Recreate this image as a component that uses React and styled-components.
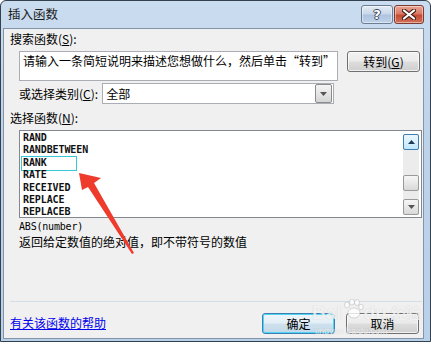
import React from 'react';
import styled, { createGlobalStyle } from 'styled-components';

const GlobalStyle = createGlobalStyle`
  html, body {
    margin: 0;
    padding: 0;
    background: #ffffff;
  }
  body {
    font-family: "Noto Sans CJK SC", "Liberation Sans", sans-serif;
    font-size: 12px;
    color: #000;
  }
`;

const Window = styled.div`
  position: relative;
  width: 431px;
  height: 342px;
  box-sizing: border-box;
  border: 1px solid #34404e;
  border-radius: 6px 6px 0 0;
  background: linear-gradient(180deg, #cadcef 0%, #bdd3ea 40%, #b9d0e9 100%);
  padding: 0 6px 2px 2px;
  display: flex;
  flex-direction: column;
  overflow: hidden;
`;

const TitleBar = styled.div`
  height: 27px;
  display: flex;
  align-items: flex-start;
`;

const Title = styled.div`
  margin: 4px 0 0 5px;
  font-size: 12.5px;
  line-height: 17px;
  color: #1a1a1a;
`;

const TitleButtons = styled.div`
  margin: 4px 0 0 auto;
  display: flex;
  gap: 1px;
`;

const CaptionButton = styled.div`
  width: ${p => p.$w}px;
  height: 19px;
  box-sizing: border-box;
  border: 1px solid ${p => (p.$close ? '#7c3a30' : '#6c7d94')};
  border-radius: 3px;
  background: ${p =>
    p.$close
      ? 'linear-gradient(180deg, #e8a494 0%, #d97a66 45%, #c54a33 55%, #d0705a 100%)'
      : 'linear-gradient(180deg, #e4ecf5 0%, #c9d8ea 45%, #adc3df 55%, #bfd2e9 100%)'};
  box-shadow: inset 0 0 0 1px rgba(255, 255, 255, 0.45);
  display: flex;
  align-items: center;
  justify-content: center;
`;

const HelpMark = styled.span`
  font-family: "DejaVu Sans", sans-serif;
  font-weight: bold;
  font-size: 13px;
  line-height: 1;
  color: #fff;
  text-shadow: 1px 0 0 #3d4a5c, -1px 0 0 #3d4a5c, 0 1px 0 #3d4a5c, 0 -1px 0 #3d4a5c;
`;

const Client = styled.div`
  flex: 1;
  background: #f0f0f0;
  border: 1px solid #8494a8;
  padding: 0 0 0 6px;
  display: flex;
  flex-direction: column;
`;

const Label = styled.div`
  line-height: 15px;
  margin: ${p => p.$m || '0'};
  white-space: nowrap;
`;

const SearchRow = styled.div`
  display: flex;
  align-items: flex-start;
  margin: 5px 0 0 9px;
`;

const SearchBox = styled.div`
  width: 319px;
  height: 30px;
  box-sizing: border-box;
  border: 1px solid #aaadb3;
  background: #fff;
  padding: 1px 0 0 3px;
  line-height: 16px;
  white-space: nowrap;
  overflow: hidden;
`;

const Button = styled.div`
  width: 73px;
  height: 21px;
  box-sizing: border-box;
  margin-left: ${p => p.$ml || 0}px;
  border: 1px solid ${p => (p.$default ? '#3c7fb1' : '#707070')};
  border-radius: 3px;
  background: ${p =>
    p.$default
      ? 'linear-gradient(180deg, #f0f6fa 0%, #e3eef6 48%, #cfe1ee 52%, #c2d8e8 100%)'
      : 'linear-gradient(180deg, #f2f2f2 0%, #ebebeb 48%, #dddddd 52%, #cfcfcf 100%)'};
  box-shadow: ${p =>
    p.$default ? 'inset 0 0 0 1px #50d4f6' : 'inset 0 0 0 1px rgba(255,255,255,0.7)'};
  display: flex;
  align-items: center;
  justify-content: center;
  line-height: 15px;
`;

const CategoryRow = styled.div`
  display: flex;
  align-items: center;
  margin: 2px 0 0 9px;
`;

const Select = styled.div`
  margin-left: 4px;
  width: 232px;
  height: 21px;
  box-sizing: border-box;
  border: 1px solid #aaadb3;
  background: #fff;
  display: flex;
  align-items: stretch;
`;

const SelectText = styled.div`
  flex: 1;
  padding: 1px 0 0 3px;
  line-height: 17px;
`;

const DropButton = styled.div`
  width: 17px;
  box-sizing: border-box;
  margin: 0 1px 0 0;
  border: 1px solid #8c8c8c;
  border-radius: 2px;
  background: linear-gradient(180deg, #f4f4f4 0%, #e6e6e6 50%, #d4d4d4 100%);
  display: flex;
  align-items: center;
  justify-content: center;
`;

const ListBox = styled.div`
  margin: 5px 0 0 9px;
  width: 403px;
  height: 88px;
  box-sizing: border-box;
  border: 1px solid #828790;
  background: #fff;
  display: flex;
  overflow: hidden;
`;

const Items = styled.div`
  flex: 1;
  padding: 1px 0 0 3px;
`;

const Item = styled.div`
  position: relative;
  font-family: "DejaVu Sans Mono", "Liberation Mono", monospace;
  font-weight: bold;
  font-size: 10px;
  letter-spacing: -0.1px;
  line-height: 12.4px;
  height: 12.4px;
  white-space: nowrap;
  color: #111;

  ${p =>
    p.$marked &&
    `
    &::after {
      content: '';
      position: absolute;
      left: -2px;
      top: -1px;
      width: 56px;
      height: 15px;
      box-sizing: border-box;
      border: 1.5px solid #36c8d6;
    }
  `}
`;

const ScrollBar = styled.div`
  width: 16px;
  margin: 3px 2px 2px 0;
  background: #ececec;
  display: flex;
  flex-direction: column;
`;

const ScrollButton = styled.div`
  height: 16px;
  box-sizing: border-box;
  border: 1px solid ${p => (p.$hot ? '#3c7fb1' : '#9a9a9a')};
  border-radius: 2px;
  background: ${p =>
    p.$hot
      ? 'linear-gradient(180deg, #eaf6fd 0%, #d9f0fc 50%, #bee6fd 100%)'
      : 'linear-gradient(180deg, #f6f6f6 0%, #e8e8e8 50%, #d8d8d8 100%)'};
  margin-top: ${p => p.$mt || 0}px;
  display: flex;
  align-items: center;
  justify-content: center;
`;

const Syntax = styled.div`
  margin: 2px 0 0 9px;
  font-family: "DejaVu Sans Mono", "Liberation Mono", monospace;
  font-size: 10px;
  letter-spacing: -0.2px;
  line-height: 14px;
`;

const Description = styled.div`
  margin: 0 0 0 9px;
  line-height: 16px;
  white-space: nowrap;
`;

const Separator = styled.div`
  margin: 51px 0 0 0;
  width: 412px;
  height: 1px;
  background: #d3dde6;
`;

const Footer = styled.div`
  display: flex;
  align-items: flex-start;
  margin-top: 11px;
`;

const HelpLink = styled.a`
  margin-top: 2px;
  color: #0000ee;
  text-decoration: underline;
  line-height: 15px;
  cursor: pointer;
`;

const FooterButtons = styled.div`
  margin-left: auto;
  margin-right: 4px;
  display: flex;
`;

const Overlay = styled.svg`
  position: absolute;
  left: -1px;
  top: -1px;
  pointer-events: none;
`;

const Watermark = styled.div`
  position: absolute;
  left: 311px;
  top: 298px;
  color: rgba(255, 255, 255, 0.75);
  text-shadow: 0 0 1px rgba(120, 120, 120, 0.35);
  font-family: "Liberation Sans", "Noto Sans CJK SC", sans-serif;
  pointer-events: none;
`;

const MarkTop = styled.div`
  display: flex;
  align-items: baseline;
  font-size: 19px;
  font-weight: bold;
  line-height: 20px;
`;

const MarkCn = styled.span`
  font-family: "Noto Sans CJK SC", sans-serif;
  font-size: 15px;
  margin-left: 4px;
`;

const MarkUrl = styled.div`
  font-size: 9px;
  line-height: 10px;
  margin: 3px 0 0 3px;
`;

const Arrow = ({ up }) => (
  <svg width="7" height="4" viewBox="0 0 7 4">
    <path d={up ? 'M0 4 L3.5 0 L7 4 Z' : 'M0 0 L7 0 L3.5 4 Z'} fill={up ? '#1d3b57' : '#555'} />
  </svg>
);

const functions = ['RAND', 'RANDBETWEEN', 'RANK', 'RATE', 'RECEIVED', 'REPLACE', 'REPLACEB'];

export default function App() {
  return (
    <>
      <GlobalStyle />
      <Window>
        <TitleBar>
          <Title>插入函数</Title>
          <TitleButtons>
            <CaptionButton $w={32}>
              <HelpMark>?</HelpMark>
            </CaptionButton>
            <CaptionButton $w={30} $close>
              <svg width="14" height="11" viewBox="0 0 14 11">
                <path d="M2 1.5 L12 9.5 M12 1.5 L2 9.5" stroke="#4a2018" strokeWidth="4.2" strokeLinecap="round" />
                <path d="M2 1.5 L12 9.5 M12 1.5 L2 9.5" stroke="#fff" strokeWidth="2.2" strokeLinecap="round" />
              </svg>
            </CaptionButton>
          </TitleButtons>
        </TitleBar>

        <Client>
          <Label $m="2px 0 0 0">搜索函数(<u>S</u>):</Label>
          <SearchRow>
            <SearchBox>请输入一条简短说明来描述您想做什么，然后单击“转到”</SearchBox>
            <Button $ml={9}>转到(<u>G</u>)</Button>
          </SearchRow>

          <CategoryRow>
            <Label>或选择类别(<u>C</u>):</Label>
            <Select>
              <SelectText>全部</SelectText>
              <DropButton>
                <Arrow />
              </DropButton>
            </Select>
          </CategoryRow>

          <Label $m="6px 0 0 0">选择函数(<u>N</u>):</Label>
          <ListBox>
            <Items>
              {functions.map(name => (
                <Item key={name} $marked={name === 'RANK'}>
                  {name}
                </Item>
              ))}
            </Items>
            <ScrollBar>
              <ScrollButton $hot>
                <Arrow up />
              </ScrollButton>
              <ScrollButton $mt={25} />
              <ScrollButton $mt={8}>
                <Arrow />
              </ScrollButton>
            </ScrollBar>
          </ListBox>

          <Syntax>ABS(number)</Syntax>
          <Description>返回给定数值的绝对值，即不带符号的数值</Description>

          <Separator />
          <Footer>
            <HelpLink>有关该函数的帮助</HelpLink>
            <FooterButtons>
              <Button $default>确定</Button>
              <Button $ml={11}>取消</Button>
            </FooterButtons>
          </Footer>
        </Client>

        <Watermark>
          <MarkTop>
            Bai
            <svg width="22" height="20" viewBox="0 0 22 20">
              <g fill="rgba(255,255,255,0.8)" stroke="rgba(150,150,150,0.35)" strokeWidth="1">
                <ellipse cx="5" cy="6" rx="2.5" ry="3" />
                <ellipse cx="10" cy="3" rx="2.5" ry="3" />
                <ellipse cx="15" cy="3.5" rx="2.5" ry="3" />
                <ellipse cx="19" cy="8" rx="2.2" ry="2.8" />
                <ellipse cx="12" cy="14" rx="6" ry="5" />
              </g>
            </svg>
            du
            <MarkCn>经验</MarkCn>
          </MarkTop>
          <MarkUrl>jingyan.baidu.com</MarkUrl>
        </Watermark>

        <Overlay width="431" height="344" viewBox="0 0 431 344">
          <polygon
            points="79,173 101,178 94,183 134,253 132,254 88,187 82,190"
            fill="#ee3b2c"
          />
        </Overlay>
      </Window>
    </>
  );
}
